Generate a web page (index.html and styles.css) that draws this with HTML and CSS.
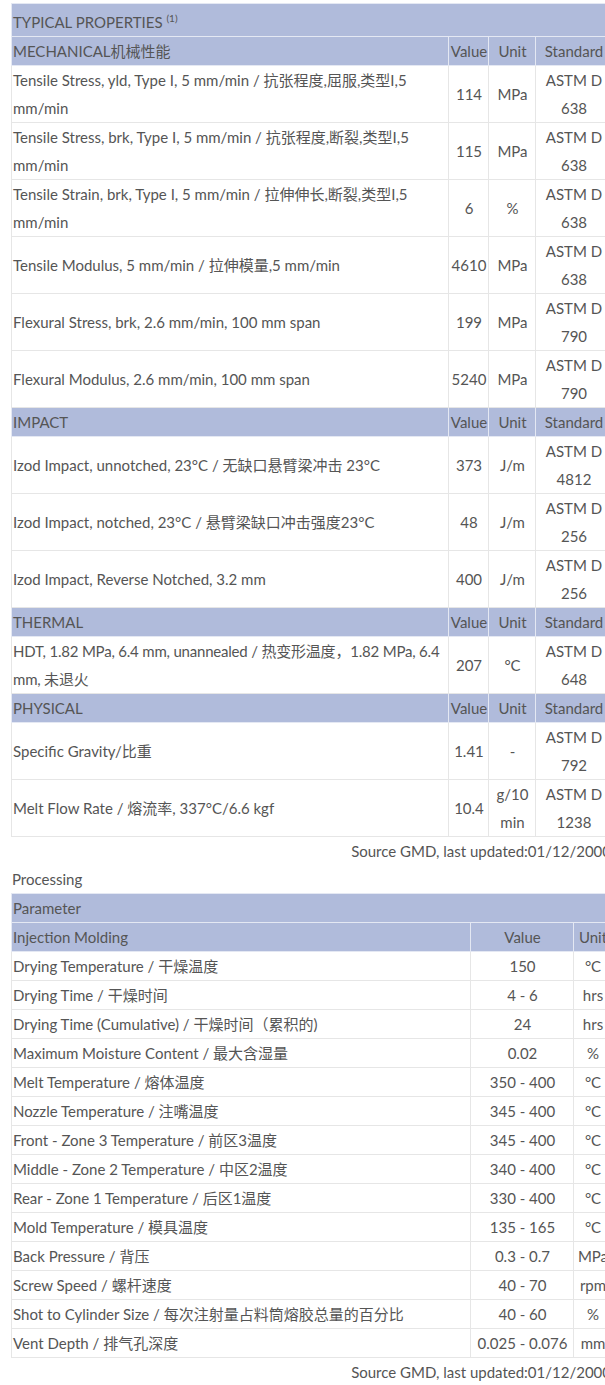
FILE: index.html
```html
<!DOCTYPE html>
<html lang="zh">
<head>
    <meta charset="UTF-8">
    <meta name="viewport" content="width=device-width, initial-scale=1.0">
    <title>Typical Properties</title>
    <link rel="stylesheet" href="styles.css">
</head>
<body>

    <div class="wrap">

        <!-- typical properties -->
        <table class="props">
            <colgroup>
                <col class="c_desc">
                <col class="c_value">
                <col class="c_unit">
                <col class="c_std">
            </colgroup>
            <tr class="title_row">
                <td colspan="4">TYPICAL PROPERTIES <sup>(1)</sup></td>
            </tr>

            <tr class="group_row">
                <td>MECHANICAL机械性能</td><td>Value</td><td>Unit</td><td>Standard</td>
            </tr>
            <tr>
                <td>Tensile Stress, yld, Type I, 5 mm/min / 抗张程度,屈服,类型I,5 mm/min</td>
                <td>114</td><td>MPa</td><td>ASTM D 638</td>
            </tr>
            <tr>
                <td>Tensile Stress, brk, Type I, 5 mm/min / 抗张程度,断裂,类型I,5 mm/min</td>
                <td>115</td><td>MPa</td><td>ASTM D 638</td>
            </tr>
            <tr>
                <td>Tensile Strain, brk, Type I, 5 mm/min / 拉伸伸长,断裂,类型I,5 mm/min</td>
                <td>6</td><td>%</td><td>ASTM D 638</td>
            </tr>
            <tr>
                <td>Tensile Modulus, 5 mm/min / 拉伸模量,5 mm/min</td>
                <td>4610</td><td>MPa</td><td>ASTM D 638</td>
            </tr>
            <tr>
                <td>Flexural Stress, brk, 2.6 mm/min, 100 mm span</td>
                <td>199</td><td>MPa</td><td>ASTM D 790</td>
            </tr>
            <tr>
                <td>Flexural Modulus, 2.6 mm/min, 100 mm span</td>
                <td>5240</td><td>MPa</td><td>ASTM D 790</td>
            </tr>

            <tr class="group_row">
                <td>IMPACT</td><td>Value</td><td>Unit</td><td>Standard</td>
            </tr>
            <tr>
                <td>Izod Impact, unnotched, 23°C / 无缺口悬臂梁冲击 23°C</td>
                <td>373</td><td>J/m</td><td>ASTM D 4812</td>
            </tr>
            <tr>
                <td>Izod Impact, notched, 23°C / 悬臂梁缺口冲击强度23°C</td>
                <td>48</td><td>J/m</td><td>ASTM D 256</td>
            </tr>
            <tr>
                <td>Izod Impact, Reverse Notched, 3.2 mm</td>
                <td>400</td><td>J/m</td><td>ASTM D 256</td>
            </tr>

            <tr class="group_row">
                <td>THERMAL</td><td>Value</td><td>Unit</td><td>Standard</td>
            </tr>
            <tr>
                <td class="tight">HDT, 1.82 MPa, 6.4 mm, unannealed / 热变形温度，1.82 MPa, 6.4 mm, 未退火</td>
                <td>207</td><td>°C</td><td>ASTM D 648</td>
            </tr>

            <tr class="group_row">
                <td>PHYSICAL</td><td>Value</td><td>Unit</td><td>Standard</td>
            </tr>
            <tr>
                <td>Specific Gravity/比重</td>
                <td>1.41</td><td>-</td><td>ASTM D 792</td>
            </tr>
            <tr>
                <td>Melt Flow Rate / 熔流率, 337°C/6.6 kgf</td>
                <td>10.4</td><td>g/10 min</td><td>ASTM D 1238</td>
            </tr>
        </table>
        <div class="source">Source GMD, last updated:01/12/2000</div>

        <!-- processing -->
        <div class="section_title">Processing</div>
        <table class="proc">
            <colgroup>
                <col class="p_desc">
                <col class="p_value">
                <col class="p_unit">
            </colgroup>
            <tr class="group_row">
                <td colspan="3">Parameter</td>
            </tr>
            <tr class="group_row">
                <td>Injection Molding</td><td>Value</td><td>Unit</td>
            </tr>
            <tr><td>Drying Temperature / 干燥温度</td><td>150</td><td>°C</td></tr>
            <tr><td>Drying Time / 干燥时间</td><td>4 - 6</td><td>hrs</td></tr>
            <tr><td>Drying Time (Cumulative) / 干燥时间（累积的)</td><td>24</td><td>hrs</td></tr>
            <tr><td>Maximum Moisture Content / 最大含湿量</td><td>0.02</td><td>%</td></tr>
            <tr><td>Melt Temperature / 熔体温度</td><td>350 - 400</td><td>°C</td></tr>
            <tr><td>Nozzle Temperature / 注嘴温度</td><td>345 - 400</td><td>°C</td></tr>
            <tr><td>Front - Zone 3 Temperature / 前区3温度</td><td>345 - 400</td><td>°C</td></tr>
            <tr><td>Middle - Zone 2 Temperature / 中区2温度</td><td>340 - 400</td><td>°C</td></tr>
            <tr><td>Rear - Zone 1 Temperature / 后区1温度</td><td>330 - 400</td><td>°C</td></tr>
            <tr><td>Mold Temperature / 模具温度</td><td>135 - 165</td><td>°C</td></tr>
            <tr><td>Back Pressure / 背压</td><td>0.3 - 0.7</td><td>MPa</td></tr>
            <tr><td>Screw Speed / 螺杆速度</td><td>40 - 70</td><td>rpm</td></tr>
            <tr><td>Shot to Cylinder Size / 每次注射量占料筒熔胶总量的百分比</td><td>40 - 60</td><td>%</td></tr>
            <tr><td>Vent Depth / 排气孔深度</td><td>0.025 - 0.076</td><td>mm</td></tr>
        </table>
        <div class="source">Source GMD, last updated:01/12/2000</div>

    </div>

</body>
</html>
```

FILE: styles.css
```css
html, body{
    margin: 0;
    padding: 0;
    overflow-x: hidden;
}

body{
    font-family: Lato, "Noto Sans CJK SC", sans-serif;
    font-size: 15px;
    line-height: 28px;
    color: #555;
    background: #fff;
}

.wrap{
    width: 600px;
    margin-left: 11px;
    padding-top: 3px;
}

table{
    width: 600px;
    table-layout: fixed;
    border-collapse: collapse;
    border: 1px solid #333;
}

td{
    padding: 0 0 0 1px;
    border: 1px solid #e6e6e6;
    text-align: center;
    vertical-align: middle;
}

td:first-child{
    text-align: left;
}

td.tight{
    letter-spacing: -0.2px;
}

.c_desc{ width: 437px; }
.c_value{ width: 40px; }
.c_unit{ width: 47px; }
.c_std{ width: 76px; }

.p_desc{ width: 459px; }
.p_value{ width: 103px; }
.p_unit{ width: 38px; }

.title_row td,
.group_row td{
    background-color: #b0bbdb;
    border-color: #e4e8f3;
}

.title_row td{
    padding-top: 4px;
}

.title_row sup{
    font-size: 10px;
    line-height: 0;
}

.source{
    text-align: right;
}

.section_title{
    padding-left: 1px;
}
```
